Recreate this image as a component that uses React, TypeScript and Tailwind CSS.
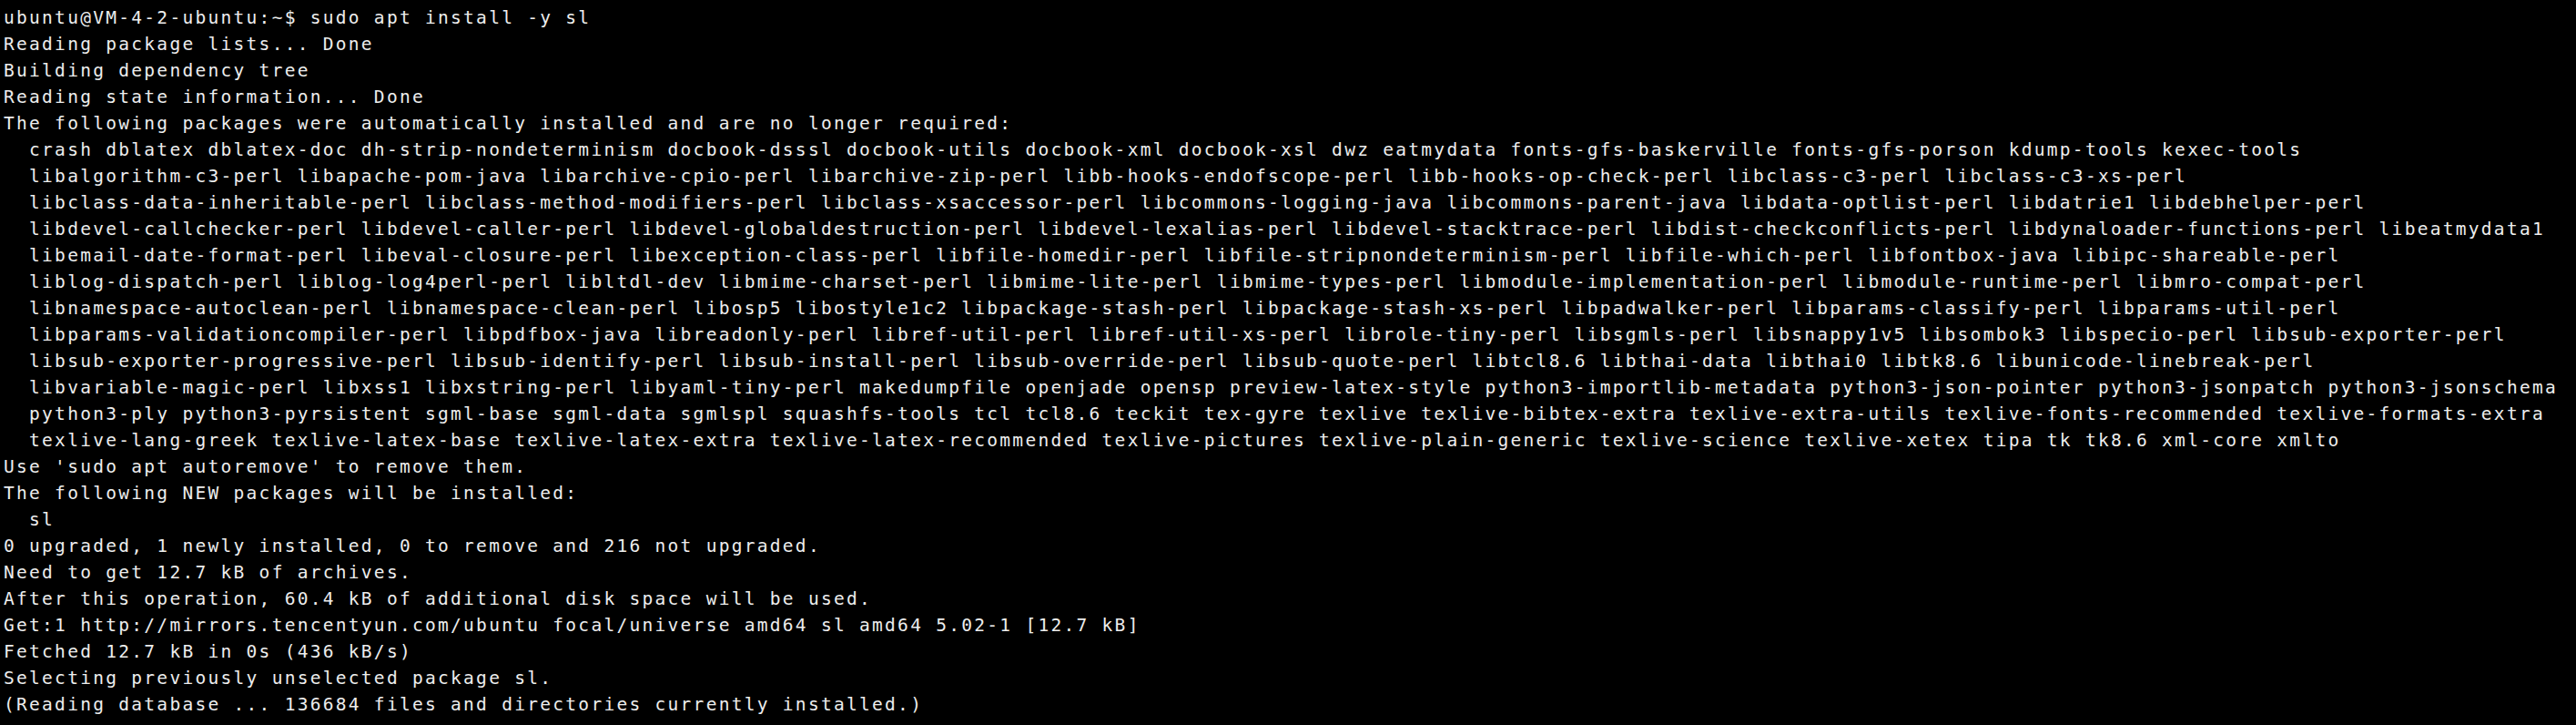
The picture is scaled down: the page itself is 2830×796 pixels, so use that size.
import React from 'react';

const lines = [
  "ubuntu@VM-4-2-ubuntu:~$ sudo apt install -y sl",
  "Reading package lists... Done",
  "Building dependency tree",
  "Reading state information... Done",
  "The following packages were automatically installed and are no longer required:",
  "  crash dblatex dblatex-doc dh-strip-nondeterminism docbook-dsssl docbook-utils docbook-xml docbook-xsl dwz eatmydata fonts-gfs-baskerville fonts-gfs-porson kdump-tools kexec-tools",
  "  libalgorithm-c3-perl libapache-pom-java libarchive-cpio-perl libarchive-zip-perl libb-hooks-endofscope-perl libb-hooks-op-check-perl libclass-c3-perl libclass-c3-xs-perl",
  "  libclass-data-inheritable-perl libclass-method-modifiers-perl libclass-xsaccessor-perl libcommons-logging-java libcommons-parent-java libdata-optlist-perl libdatrie1 libdebhelper-perl",
  "  libdevel-callchecker-perl libdevel-caller-perl libdevel-globaldestruction-perl libdevel-lexalias-perl libdevel-stacktrace-perl libdist-checkconflicts-perl libdynaloader-functions-perl libeatmydata1",
  "  libemail-date-format-perl libeval-closure-perl libexception-class-perl libfile-homedir-perl libfile-stripnondeterminism-perl libfile-which-perl libfontbox-java libipc-shareable-perl",
  "  liblog-dispatch-perl liblog-log4perl-perl libltdl-dev libmime-charset-perl libmime-lite-perl libmime-types-perl libmodule-implementation-perl libmodule-runtime-perl libmro-compat-perl",
  "  libnamespace-autoclean-perl libnamespace-clean-perl libosp5 libostyle1c2 libpackage-stash-perl libpackage-stash-xs-perl libpadwalker-perl libparams-classify-perl libparams-util-perl",
  "  libparams-validationcompiler-perl libpdfbox-java libreadonly-perl libref-util-perl libref-util-xs-perl librole-tiny-perl libsgmls-perl libsnappy1v5 libsombok3 libspecio-perl libsub-exporter-perl",
  "  libsub-exporter-progressive-perl libsub-identify-perl libsub-install-perl libsub-override-perl libsub-quote-perl libtcl8.6 libthai-data libthai0 libtk8.6 libunicode-linebreak-perl",
  "  libvariable-magic-perl libxss1 libxstring-perl libyaml-tiny-perl makedumpfile openjade opensp preview-latex-style python3-importlib-metadata python3-json-pointer python3-jsonpatch python3-jsonschema",
  "  python3-ply python3-pyrsistent sgml-base sgml-data sgmlspl squashfs-tools tcl tcl8.6 teckit tex-gyre texlive texlive-bibtex-extra texlive-extra-utils texlive-fonts-recommended texlive-formats-extra",
  "  texlive-lang-greek texlive-latex-base texlive-latex-extra texlive-latex-recommended texlive-pictures texlive-plain-generic texlive-science texlive-xetex tipa tk tk8.6 xml-core xmlto",
  "Use 'sudo apt autoremove' to remove them.",
  "The following NEW packages will be installed:",
  "  sl",
  "0 upgraded, 1 newly installed, 0 to remove and 216 not upgraded.",
  "Need to get 12.7 kB of archives.",
  "After this operation, 60.4 kB of additional disk space will be used.",
  "Get:1 http://mirrors.tencentyun.com/ubuntu focal/universe amd64 sl amd64 5.02-1 [12.7 kB]",
  "Fetched 12.7 kB in 0s (436 kB/s)",
  "Selecting previously unselected package sl.",
  "(Reading database ... 136684 files and directories currently installed.)",
];

const App = () => {
  return (
    <div className="min-h-screen w-full bg-black overflow-hidden">
      <div className="pl-[4px] pt-[5px] font-['DejaVu_Sans_Mono',monospace] text-[19.5px] leading-[29px] tracking-[2.29px] text-[#ededed]">
        {lines.map((line, i) => (
          <div key={i} className="whitespace-pre">
            {line || ' '}
          </div>
        ))}
      </div>
    </div>
  );
};

export default App;
